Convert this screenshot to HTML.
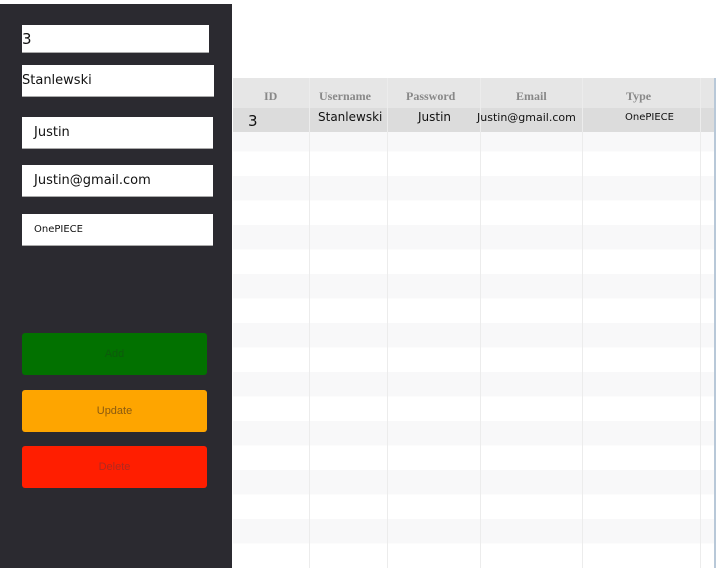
<!DOCTYPE html>
<html><head><meta charset="utf-8"><style>
*{margin:0;padding:0;box-sizing:border-box}
body{width:721px;height:577px;background:#fff;position:relative;overflow:hidden;font-family:"DejaVu Sans","Liberation Sans",sans-serif}
#side{position:absolute;left:0;top:4px;width:232px;height:564px;background:#2b2a30}
.in{position:absolute;background:#fff;color:#111;font-size:13px;display:flex;align-items:center;border-bottom:1px solid #aaa}
.btn{position:absolute;left:22px;width:185px;height:42px;border-radius:3px;display:flex;align-items:center;justify-content:center;font-size:11px;font-family:"Liberation Sans",sans-serif}
#tbl{position:absolute;left:233px;top:78px;width:483px;height:490px;background:
repeating-linear-gradient(to bottom,#f8f8f9 0,#f8f8f9 24.5px,#fff 24.5px,#fff 49px);border-right:2px solid #b8c8d8;overflow:hidden}
.vl{position:absolute;top:0;width:1px;height:100%;background:#ececec}
.hd{position:absolute;left:0;top:0;width:100%;height:30px;background:#e6e6e6}
.sel{position:absolute;left:0;top:30px;width:100%;height:24px;background:#dcdcdc}
.t{position:absolute;font-size:12px;color:#111;white-space:nowrap}
.h{position:absolute;font-family:"Liberation Serif",serif;font-weight:bold;font-size:12px;color:#888;top:11px}
</style></head><body>
<div id="side"></div>
<div class="in" style="left:22px;top:25px;width:187px;height:28px;font-size:15px">3</div>
<div class="in" style="left:22px;top:65px;width:192px;height:32px">Stanlewski</div>
<div class="in" style="left:22px;top:117px;width:191px;height:32px;padding-left:12px">Justin</div>
<div class="in" style="left:22px;top:165px;width:191px;height:32px;padding-left:12px">Justin@gmail.com</div>
<div class="in" style="left:22px;top:214px;width:191px;height:32px;padding-left:12px;font-size:10px">OnePIECE</div>
<div class="btn" style="top:333px;background:#027100;color:#0d5a0b">Add</div>
<div class="btn" style="top:390px;background:#fea500;color:#8a5a10">Update</div>
<div class="btn" style="top:446px;background:#ff1e00;color:#b02a20">Delete</div>
<div id="tbl">
<div class="hd"></div>
<div class="sel"></div>
<div class="vl" style="left:76px"></div>
<div class="vl" style="left:154px"></div>
<div class="vl" style="left:247px"></div>
<div class="vl" style="left:349px"></div>
<div class="vl" style="left:467px"></div>
<div class="h" style="left:31px">ID</div>
<div class="h" style="left:86px">Username</div>
<div class="h" style="left:173px">Password</div>
<div class="h" style="left:283px">Email</div>
<div class="h" style="left:393px">Type</div>
<div class="t" style="left:15px;top:34px;font-size:15px">3</div>
<div class="t" style="left:85px;top:32px">Stanlewski</div>
<div class="t" style="left:185px;top:32px">Justin</div>
<div class="t" style="left:244px;top:33px;font-size:11px">Justin@gmail.com</div>
<div class="t" style="left:392px;top:34px;font-size:10px">OnePIECE</div>
</div>
</body></html>
